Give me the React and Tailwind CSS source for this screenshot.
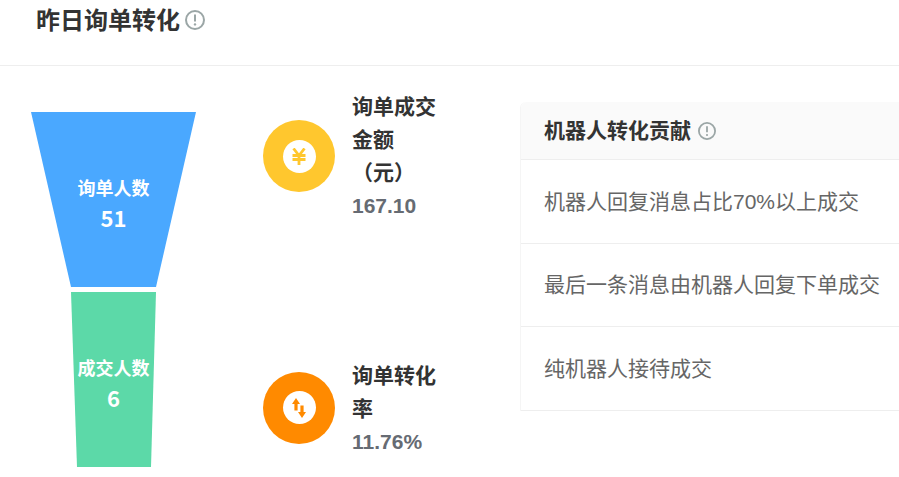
const FONT = "font-['Liberation_Sans','Noto_Sans_CJK_SC',sans-serif]";

const InfoIcon = ({ size = 20 }) => (
  <svg width={size} height={size} viewBox="0 0 20 20" fill="none" className="shrink-0">
    <circle cx="10" cy="10" r="9" stroke="#9ba6a6" strokeWidth="2" />
    <path d="M10 4.6v6.8" stroke="#9ba6a6" strokeWidth="2" />
    <circle cx="10" cy="14.4" r="1.2" fill="#9ba6a6" />
  </svg>
);

const Funnel = () => (
  <svg width="230" height="402" viewBox="0 0 230 402" className="shrink-0">
    <polygon points="31,46 196,46 156,221 71,221" fill="#4aa8ff" />
    <polygon points="71,226 156,226 151,401 77,401" fill="#5cd9a8" />
    <g fill="#ffffff" fontFamily="'Noto Sans CJK SC', sans-serif" fontWeight="700" textAnchor="middle">
      <text x="113.5" y="128.5" fontSize="18">询单人数</text>
      <text x="113.5" y="161" fontSize="22">51</text>
      <text x="113.5" y="308.5" fontSize="18">成交人数</text>
      <text x="113.5" y="341" fontSize="22">6</text>
    </g>
  </svg>
);

const YenIcon = () => (
  <svg width="14" height="17" viewBox="0 0 14 17" fill="none" stroke="#ffc72e" strokeWidth="2.8">
    <path d="M1.5 0.5L7 7.5l5.5-7M0.5 7.5h13M0.5 11.5h13M7 7v10" />
  </svg>
);

const SwapIcon = () => (
  <svg width="14" height="20" viewBox="0 0 14 20" fill="#ff8a00">
    <path d="M4 0l4 6H5.6v6.5H2.4V6H0z" />
    <path d="M10 20l-4-6h2.4V7.5h3.2V14H14z" />
  </svg>
);

const Stat = ({ color, icon, lines, value, textClass = "" }) => (
  <div className="flex items-center gap-[17px]">
    <div className={`flex h-[72px] w-[72px] shrink-0 items-center justify-center rounded-full ${color}`}>
      <div className="flex h-[33px] w-[33px] items-center justify-center rounded-full bg-white">{icon}</div>
    </div>
    <div className={`w-[90px] text-[21px] leading-[33px] font-bold text-[#333] ${textClass}`}>
      {lines}
      <div className="text-[#666b73]">{value}</div>
    </div>
  </div>
);

const rows = ["机器人回复消息占比70%以上成交", "最后一条消息由机器人回复下单成交", "纯机器人接待成交"];

export default function App() {
  return (
    <div className={`h-[477px] w-[899px] overflow-hidden bg-white ${FONT}`}>
      <div className="flex h-[66px] items-start gap-[5px] border-b border-[#eeeeee] pl-[36px]">
        <h2 className="text-[24px] leading-[42px] font-bold text-[#333]">昨日询单转化</h2>
        <div className="pt-[10px]"><InfoIcon /></div>
      </div>
      <div className="flex">
        <Funnel />
        <div className="ml-[33px] flex flex-col gap-[135px] pt-[24px]">
          <Stat color="bg-[#ffc72e]" icon={<YenIcon />} lines="询单成交金额（元）" value="167.10" />
          <Stat color="bg-[#ff8a00]" icon={<SwapIcon />} lines="询单转化率" value="11.76%" textClass="pt-[2px]" />
        </div>
        <div className="ml-[78px] mt-[36px] w-[400px] shrink-0 self-start rounded-tl-md border-l border-[#f5f5f5]">
          <div className="flex h-[58px] items-center gap-[7px] rounded-tl-md border-b border-[#eeeeee] bg-[#fafafa] pl-[23px]">
            <span className="text-[21px] font-bold text-[#333]">机器人转化贡献</span>
            <InfoIcon size={18} />
          </div>
          {rows.map((row) => (
            <div key={row} className="flex h-[83.5px] items-center border-b border-[#eeeeee] pl-[23px] text-[21px] text-[#666]">
              {row}
            </div>
          ))}
        </div>
      </div>
    </div>
  );
}
